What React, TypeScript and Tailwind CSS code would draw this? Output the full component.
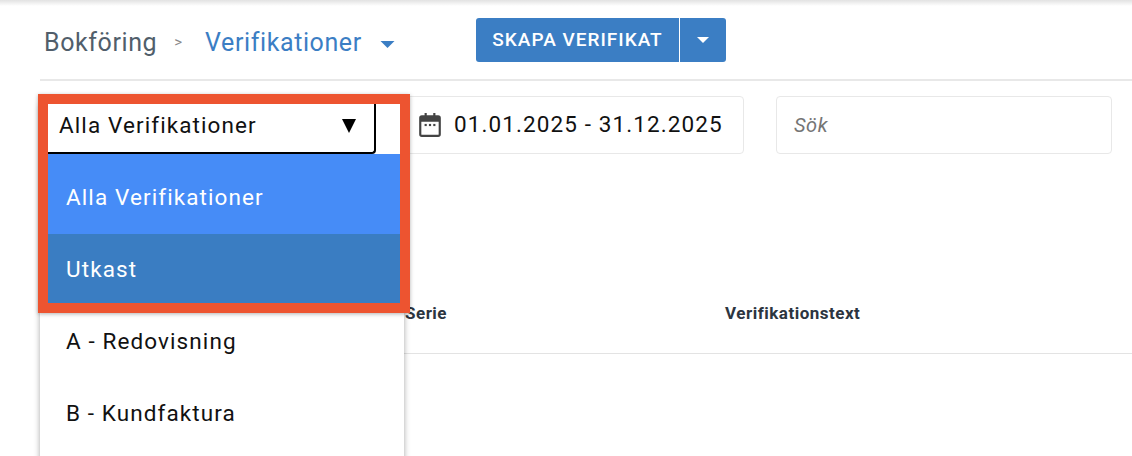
import React from "react";

function Caret({ className }: { className: string }) {
  return (
    <svg viewBox="0 0 14 7" className={className} fill="currentColor">
      <path d="M0 0h14L7 7z" />
    </svg>
  );
}

export default function App() {
  return (
    <div className="relative w-[1132px] h-[456px] overflow-hidden bg-white font-['Roboto',sans-serif]">
      <div className="h-[6px] bg-gradient-to-b from-[#e2e2e2] to-white" />
      <div className="ml-[40px]">
        <header className="flex items-start h-[75px] border-b-2 border-[#e8e8e8]">
          <div className="flex items-center h-[47px] mt-[13px] w-[436px] text-[25px] tracking-[0.6px] leading-none">
            <span className="ml-[4px] text-[#515e6b]">Bokföring</span>
            <span className="ml-[17px] text-[15px] text-[#8a8a8a] tracking-normal">&gt;</span>
            <span className="ml-[23px] text-[#3b7ec4]">Verifikationer</span>
            <Caret className="ml-[18px] mt-[3px] w-[15px] h-[7px] text-[#3b7ec4]" />
          </div>
          <div className="flex h-[44px] mt-[12px] rounded-[3px] bg-[#3b7ec4] text-white">
            <button className="w-[203px] h-full text-[19px] font-medium tracking-[1px] text-center whitespace-nowrap">SKAPA VERIFIKAT</button>
            <div className="w-px h-full bg-white" />
            <button className="flex-1 w-[46px] flex items-center justify-center">
              <Caret className="w-[12px] h-[6px] text-white" />
            </button>
          </div>
        </header>

        <div className="flex items-start mt-[15px] pl-[364px]">
          <div className="flex items-center w-[340px] h-[58px] pl-[12px] rounded-[4px] border border-[#e8e8e8] text-[22.5px] tracking-[1.1px] text-[#111] whitespace-nowrap">
            <svg viewBox="0 0 24 24" className="w-[26px] h-[26px] text-[#444] shrink-0" fill="currentColor">
              <path d="M7 1h2v2h6V1h2v2h2.500A2.500 2.500 0 0 1 22 5.500v15a2.500 2.500 0 0 1-2.500 2.500h-15A2.500 2.500 0 0 1 2 20.500v-15A2.500 2.500 0 0 1 4.500 3H7zM4 9v11.500c0 .3.200.500.500.500h15c.3 0 .500-.200.500-.500V9z" />
              <rect x="7" y="11" width="2" height="2" />
              <rect x="11" y="11" width="2" height="2" />
              <rect x="15" y="11" width="2" height="2" />
            </svg>
            <span className="ml-[11px]">01.01.2025 - 31.12.2025</span>
          </div>
          <div className="flex items-center w-[336px] h-[58px] ml-[32px] pl-[17px] rounded-[4px] border border-[#e8e8e8] text-[20px] italic tracking-[0.6px] text-[#757575]">
            Sök
          </div>
        </div>

        <div className="flex items-center h-[78px] mt-[122px] border-b border-[#e3e3e3] pb-[2px] text-[17px] tracking-[0.5px] font-bold text-[#2c3540]">
          <span className="ml-[365px] w-[320px]">Serie</span>
          <span>Verifikationstext</span>
        </div>
      </div>

      <div className="absolute left-[40px] top-[104px] w-[364px] h-[360px] bg-white shadow-[0_1px_6px_rgba(0,0,0,0.35)] text-[22.5px] tracking-[1.1px] text-[#111]">
        <div className="flex items-center justify-between w-[328px] h-[50px] ml-[8px] pl-[11px] pr-[18px] pb-[5px] border-r-2 border-b-2 border-black rounded-br-[4px]">
          <span>Alla Verifikationer</span>
          <span className="w-0 h-0 border-x-[7.5px] border-x-transparent border-t-[14px] border-t-black" />
        </div>
        <div className="flex items-center h-[80px] pl-[26px] pt-[8px] bg-[#468cf7] text-white">Alla Verifikationer</div>
        <div className="flex items-center h-[72px] pl-[26px] bg-[#3a7dc2] text-white">Utkast</div>
        <div className="flex items-center h-[72px] pl-[26px]">A - Redovisning</div>
        <div className="flex items-center h-[72px] pl-[26px]">B - Kundfaktura</div>
      </div>

      <div className="absolute left-[38px] top-[94px] w-[372px] h-[219px] border-[10px] border-[#ed5430] shadow-[0_1px_4px_rgba(0,0,0,0.3)]" />
    </div>
  );
}
